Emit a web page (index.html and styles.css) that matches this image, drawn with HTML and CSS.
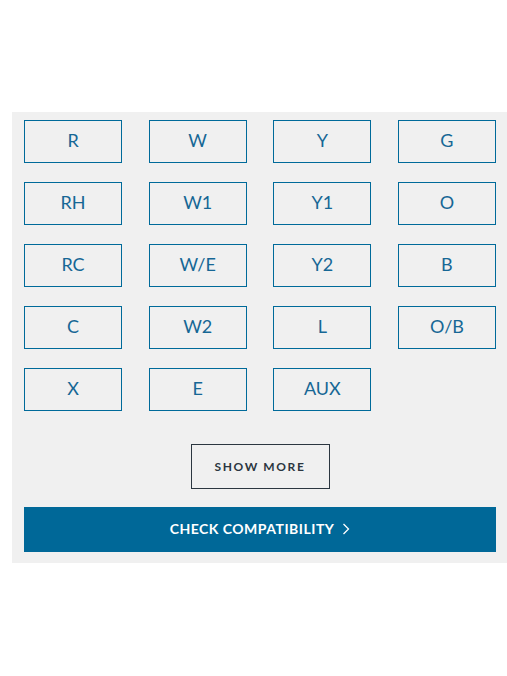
FILE: index.html
```html
<!DOCTYPE html>
<html lang="en">
<head>
    <meta charset="UTF-8">
    <meta name="viewport" content="width=device-width, initial-scale=1.0">
    <title>Wire Selector</title>
    <link rel="stylesheet" href="styles.css">
</head>
<body>
    <div class="panel">
        <div class="wire-grid">
            <button class="wire">R</button>
            <button class="wire">W</button>
            <button class="wire">Y</button>
            <button class="wire">G</button>
            <button class="wire">RH</button>
            <button class="wire">W1</button>
            <button class="wire">Y1</button>
            <button class="wire">O</button>
            <button class="wire">RC</button>
            <button class="wire">W/E</button>
            <button class="wire">Y2</button>
            <button class="wire">B</button>
            <button class="wire">C</button>
            <button class="wire">W2</button>
            <button class="wire">L</button>
            <button class="wire">O/B</button>
            <button class="wire">X</button>
            <button class="wire">E</button>
            <button class="wire">AUX</button>
        </div>

        <div class="more-row">
            <button class="show-more">SHOW MORE</button>
        </div>

        <button class="check">
            CHECK COMPATIBILITY
            <svg class="chevron" width="8" height="12" viewBox="0 0 8 12">
                <path d="M1.5 1 L6.5 6 L1.5 11" fill="none" stroke="#fff" stroke-width="1.3"/>
            </svg>
        </button>
    </div>
</body>
</html>
```

FILE: styles.css
```css
body {
    margin: 0;
    padding: 112px 0 0 12px;
    font-family: Lato, "Open Sans", sans-serif;
    background: #fff;
}
.panel {
    background: #f0f0f0;
    padding: 8px 11px 11px 12px;
}
.wire-grid {
    display: grid;
    grid-template-columns: repeat(4, 1fr);
    column-gap: 26.5px;
    row-gap: 19px;
    width: 472px;
}
button {
    font-family: inherit;
    cursor: pointer;
}
.wire {
    height: 43px;
    background: transparent;
    border: 1px solid #006a9a;
    color: #166795;
    font-size: 18px;
    padding: 0 0 3px;
}
.more-row {
    display: flex;
    justify-content: center;
    margin: 33px 0 18px;
    width: 472px;
}
.show-more {
    width: 139px;
    height: 45px;
    background: transparent;
    border: 1px solid #2b3640;
    color: #2b3640;
    font-size: 12px;
    font-weight: 700;
    letter-spacing: 1.6px;
    padding: 0 0 1px;
}
.check {
    display: flex;
    align-items: center;
    justify-content: center;
    gap: 8px;
    width: 472px;
    height: 45px;
    background: #006898;
    border: none;
    color: #fff;
    font-size: 14px;
    font-weight: 700;
    letter-spacing: 0.5px;
    padding: 0 0 2px;
}
```
